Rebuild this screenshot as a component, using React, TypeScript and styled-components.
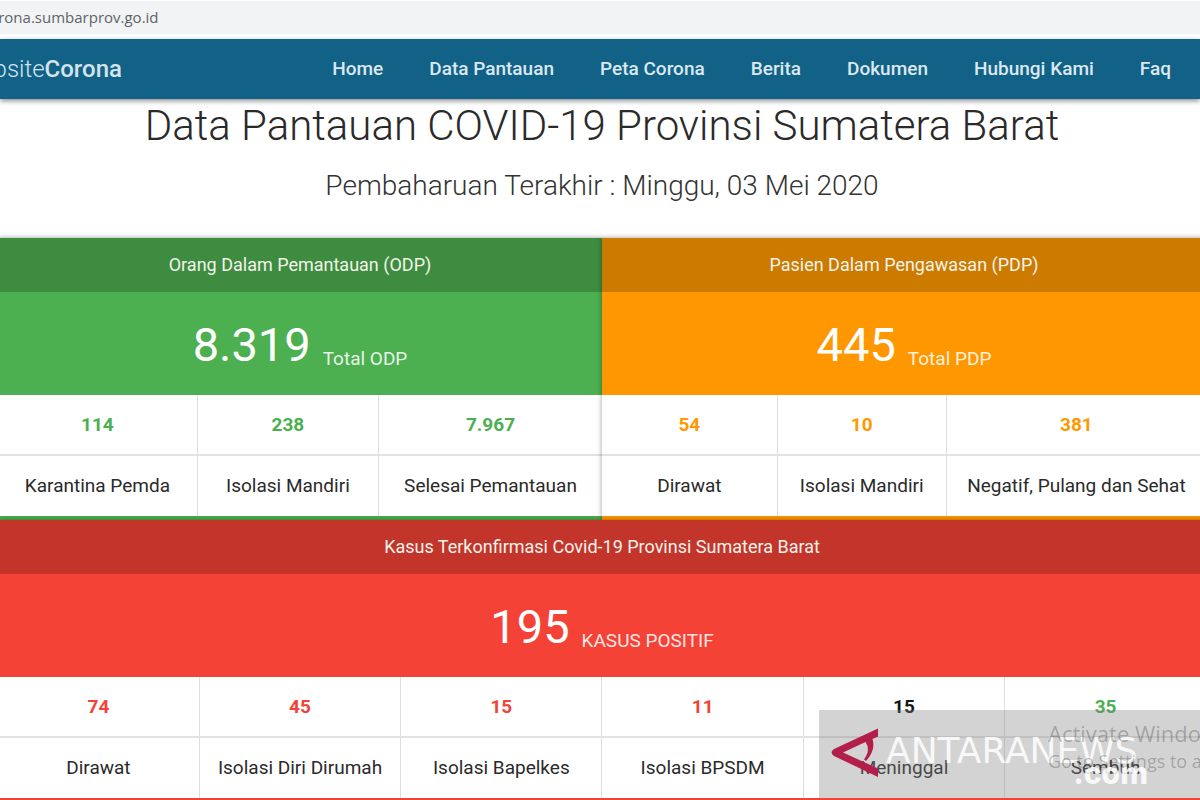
import React from "react";
import styled, { createGlobalStyle } from "styled-components";

const GlobalStyle = createGlobalStyle`
  * { box-sizing: border-box; }
  html { overflow: hidden; }
  body {
    margin: 0;
    background: #fff;
    color: #2a2a2a;
    font-family: Roboto, "Liberation Sans", sans-serif;
  }
`;

const Page = styled.div`
  overflow: hidden;
`;

const AddressBar = styled.div`
  height: 34px;
  margin-bottom: 5px;
  border-top: 1px solid #fff;
  background: #f1f3f4;
  color: #5f6368;
  font: 15px/32px "Open Sans", "Noto Sans", sans-serif;
`;

const Address = styled.span`
  margin-left: -18px;
`;

const NavBar = styled.nav`
  position: relative;
  display: flex;
  align-items: center;
  justify-content: space-between;
  height: 60px;
  padding-right: 29px;
  background: #126186;
  box-shadow: 0 2px 5px rgba(0, 0, 0, 0.45);
`;

const Brand = styled.a`
  margin-left: -40px;
  color: #d5e4ec;
  font-size: 24px;
  font-weight: 300;
  line-height: 32px;
  text-decoration: none;

  strong { font-weight: 500; }
`;

const NavLinks = styled.div`
  display: flex;
  gap: 46px;
`;

const NavLink = styled.a`
  color: #dbe8ef;
  font-size: 19px;
  font-weight: 500;
  line-height: 28px;
  text-decoration: none;
  white-space: nowrap;
`;

const Main = styled.main`
  margin: 0 -6px 0 -2px;
`;

const Heading = styled.header`
  height: 139px;
  text-align: center;
`;

const Title = styled.h1`
  margin: 0;
  font-size: 42px;
  font-weight: 300;
  line-height: 54px;
`;

const Subtitle = styled.p`
  margin: 15px 0 0;
  color: #333;
  font-size: 28px;
  font-weight: 300;
  line-height: 36px;
`;

const CardRow = styled.div`
  display: grid;
  grid-template-columns: 1fr 1fr;
`;

const Card = styled.section<{ $color: string }>`
  position: relative;
  border-bottom: 4px solid ${(p) => p.$color};
  background: #fff;
  box-shadow: 0 0 5px rgba(0, 0, 0, 0.4);
`;

const CardTitle = styled.h2<{ $color: string }>`
  margin: 0;
  background: ${(p) => p.$color};
  color: #f3f3ea;
  font-size: 18px;
  font-weight: 400;
  line-height: 54px;
  text-align: center;
`;

const Total = styled.div<{ $color: string }>`
  display: flex;
  align-items: flex-end;
  justify-content: center;
  gap: 12px;
  height: 103px;
  padding-bottom: 22px;
  background: ${(p) => p.$color};
  color: #fff;
`;

const TotalNumber = styled.span`
  font-size: 47px;
  line-height: 56px;
`;

const TotalLabel = styled.span`
  color: rgba(255, 255, 255, 0.88);
  font-size: 19px;
  line-height: 28px;
`;

const Figures = styled.table`
  width: 100%;
  table-layout: fixed;
  border-collapse: collapse;
  text-align: center;
  font-size: 19px;
  line-height: 28px;
`;

const cell = `
  padding: 0;
  border-left: 1px solid #dedede;
  white-space: nowrap;
  &:first-child { border-left: 0; }
`;

const Count = styled.td<{ $color: string }>`
  ${cell}
  height: 60px;
  color: ${(p) => p.$color};
  font-weight: 700;
`;

const Label = styled.th`
  ${cell}
  height: 61px;
  border-top: 2px solid #e2e2e2;
  font-weight: 400;
`;

const Watermark = styled.div`
  position: absolute;
  right: 6px;
  bottom: 0;
  display: flex;
  width: 381px;
  height: 88px;
  padding: 18px 0 0 12px;
  overflow: hidden;
  background: rgba(128, 128, 128, 0.35);
`;

const WatermarkLogo = styled.svg`
  flex: none;
  width: 48px;
  height: 50px;
`;

const Wordmark = styled.div`
  width: 270px;
  margin: 6px 0 0 7px;
  color: rgba(255, 255, 255, 0.85);
  font: 36px/34px "DejaVu Sans", sans-serif;
`;

const WordmarkSuffix = styled.div`
  width: 262px;
  font: 800 30px/10px Inter, sans-serif;
  text-align: right;
`;

const Activation = styled.div`
  position: absolute;
  top: 8px;
  left: 229px;
  color: rgba(0, 0, 0, 0.24);
  font: 18px/26px "Open Sans", sans-serif;
  white-space: nowrap;

  strong {
    display: block;
    font-size: 22px;
    font-weight: 400;
    line-height: 30px;
  }
`;

type Figure = { label: string; value: string; color?: string; width?: string };

type StatCardProps = {
  title: string;
  total: string;
  totalLabel: string;
  color: string;
  dark: string;
  figures: Figure[];
  children?: React.ReactNode;
};

function StatCard({ title, total, totalLabel, color, dark, figures, children }: StatCardProps) {
  return (
    <Card $color={color}>
      <CardTitle $color={dark}>{title}</CardTitle>
      <Total $color={color}>
        <TotalNumber>{total}</TotalNumber>
        <TotalLabel>{totalLabel}</TotalLabel>
      </Total>
      <Figures>
        <colgroup>
          {figures.map((f) => (
            <col key={f.label} style={{ width: f.width }} />
          ))}
        </colgroup>
        <tbody>
          <tr>
            {figures.map((f) => (
              <Count key={f.label} $color={f.color ?? color}>{f.value}</Count>
            ))}
          </tr>
          <tr>
            {figures.map((f) => (
              <Label key={f.label} scope="col">{f.label}</Label>
            ))}
          </tr>
        </tbody>
      </Figures>
      {children}
    </Card>
  );
}

const links = ["Home", "Data Pantauan", "Peta Corona", "Berita", "Dokumen", "Hubungi Kami", "Faq"];

const odp: Figure[] = [
  { label: "Karantina Pemda", value: "114", width: "33%" },
  { label: "Isolasi Mandiri", value: "238", width: "30%" },
  { label: "Selesai Pemantauan", value: "7.967", width: "37%" },
];

const pdp: Figure[] = [
  { label: "Dirawat", value: "54", width: "29%" },
  { label: "Isolasi Mandiri", value: "10", width: "28%" },
  { label: "Negatif, Pulang dan Sehat", value: "381", width: "43%" },
];

const confirmed: Figure[] = [
  { label: "Dirawat", value: "74" },
  { label: "Isolasi Diri Dirumah", value: "45" },
  { label: "Isolasi Bapelkes", value: "15" },
  { label: "Isolasi BPSDM", value: "11" },
  { label: "Meninggal", value: "15", color: "#151515" },
  { label: "Sembuh", value: "35", color: "#4caf50" },
];

export default function App() {
  return (
    <Page>
      <GlobalStyle />
      <AddressBar>
        <Address>corona.sumbarprov.go.id</Address>
      </AddressBar>
      <NavBar>
        <Brand href="#">Website<strong>Corona</strong></Brand>
        <NavLinks>
          {links.map((l) => (
            <NavLink key={l} href="#">{l}</NavLink>
          ))}
        </NavLinks>
      </NavBar>
      <Main>
        <Heading>
          <Title>Data Pantauan COVID-19 Provinsi Sumatera Barat</Title>
          <Subtitle>Pembaharuan Terakhir : Minggu, 03 Mei 2020</Subtitle>
        </Heading>
        <CardRow>
          <StatCard
            title="Orang Dalam Pemantauan (ODP)"
            total="8.319"
            totalLabel="Total ODP"
            color="#4caf50"
            dark="#3d8c40"
            figures={odp}
          />
          <StatCard
            title="Pasien Dalam Pengawasan (PDP)"
            total="445"
            totalLabel="Total PDP"
            color="#ff9800"
            dark="#cc7a00"
            figures={pdp}
          />
        </CardRow>
        <StatCard
          title="Kasus Terkonfirmasi Covid-19 Provinsi Sumatera Barat"
          total="195"
          totalLabel="KASUS POSITIF"
          color="#f44336"
          dark="#c3352b"
          figures={confirmed}
        >
          <Watermark>
            <Activation>
              <strong>Activate Windows</strong>
              Go to Settings to activate Windows.
            </Activation>
            <WatermarkLogo viewBox="0 0 48 50" aria-hidden="true">
              <path
                d="M47 0.5V8.5L41.500 11Q45 22 35 33L33 31.500Q40 22 34.500 14L12 24.500L47 40.500V49L3 28Q-2 24.500 3 21Z"
                fill="#b31e4a"
              />
            </WatermarkLogo>
            <Wordmark>
              ANTARANEWS
              <WordmarkSuffix>.com</WordmarkSuffix>
            </Wordmark>
          </Watermark>
        </StatCard>
      </Main>
    </Page>
  );
}
